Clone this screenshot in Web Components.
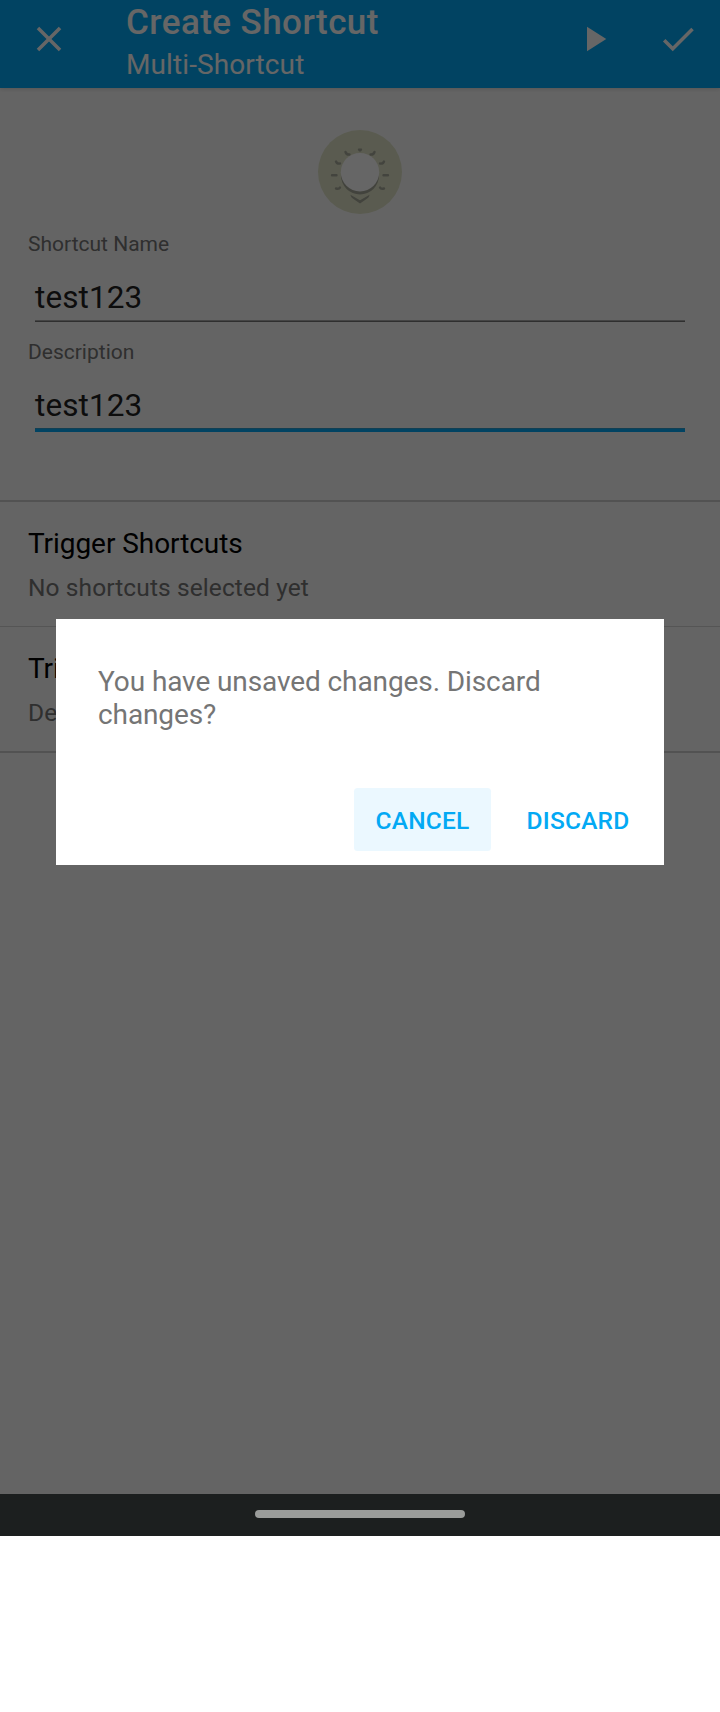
<!DOCTYPE html>
<html lang="en"><head><meta charset="utf-8"><title>Create Shortcut</title>
<style>body{margin:0;background:#fff;font-family:Roboto,sans-serif}</style></head>
<body>
<phone-screen>
  <app-bar heading="Create Shortcut" subheading="Multi-Shortcut"></app-bar>
  <shortcut-form>
    <shortcut-icon></shortcut-icon>
    <text-field label="Shortcut Name">test123</text-field>
    <text-field label="Description" class="active">test123</text-field>
  </shortcut-form>
  <setting-row class="thick" label="Trigger Shortcuts">No shortcuts selected yet</setting-row>
  <setting-row class="last" label="Tri">De</setting-row>
  <confirm-dialog slot="dialog">You have unsaved changes. Discard changes?
    <dialog-button slot="actions" class="pressed">CANCEL</dialog-button>
    <dialog-button slot="actions">DISCARD</dialog-button>
  </confirm-dialog>
  <nav-bar slot="nav"></nav-bar>
</phone-screen>
<script>
const define = (name, render) => customElements.define(name, class extends HTMLElement {
  constructor() { super(); this.attachShadow({mode: 'open'}); }
  connectedCallback() { this.shadowRoot.innerHTML = render(this); }
});
define('phone-screen', () => `<style>
:host{display:block;width:720px}
.page{position:relative;height:1494px;background:#fafafa;overflow:hidden}
.scrim{position:absolute;inset:0;background:rgba(0,0,0,.6)}
.layer{position:absolute;left:56px;top:619px}
</style><div class="page"><slot></slot><div class="scrim"></div><div class="layer"><slot name="dialog"></slot></div></div><slot name="nav"></slot>`);
define('app-bar', e => `<style>
:host{display:flex;position:relative;box-sizing:border-box;height:88px;padding:2px 21px 0 28px;background:#03a9f4;color:#fff;box-shadow:0 1px 4px rgba(0,0,0,.15)}
svg{width:42px;height:42px;fill:#fff;margin-top:16px;flex:none}
.t{margin-left:56px;flex:1}
.a{font-size:35px;line-height:41px;font-weight:500;letter-spacing:.43px}
.b{font-size:28px;line-height:33px;margin-top:5px;letter-spacing:.1px}
.actions{display:flex;gap:42px}
</style><svg viewBox="0 0 24 24"><path d="M19 6.41 17.59 5 12 10.59 6.41 5 5 6.41 10.59 12 5 17.59 6.41 19 12 13.41 17.59 19 19 17.59 13.41 12z"/></svg>
<div class="t"><div class="a">${e.getAttribute('heading')}</div><div class="b">${e.getAttribute('subheading')}</div></div>
<div class="actions"><svg viewBox="0 0 24 24"><path d="M8 5v14l11-7z"/></svg><svg viewBox="0 0 24 24"><path d="M9 16.17 4.83 12l-1.42 1.41L9 19 21 7l-1.41-1.41z"/></svg></div>`);
define('shortcut-form', () => `<style>:host{display:block;box-sizing:border-box;height:412px;padding:42px 28px 0}</style><slot></slot>`);
define('shortcut-icon', () => `<style>:host{display:block;width:84px;height:84px;margin:0 auto 17px}svg{display:block}</style>
<svg width="84" height="84" viewBox="0 0 84 84"><circle cx="42" cy="42" r="42" fill="#e1e4c8"/>
<g fill="none" stroke="#a9ab9b" stroke-width="2.400" stroke-linecap="round">
<path d="M41 19.500q1 2 2 0M27.500 22q1 3 4 2.500M56.500 22q-1 3-4 2.500M18 31.500q1 2.500 4 2M66 31.500q-1 2.500-4 2M14 45.300h4.500M70 45.300h-4.500M18 58.500q3 1 4-1M66 58.500q-3 1-4-1"/></g>
<path d="M33.500 66q.5 1.500 2 2.200l6.500 4.600 6.500-4.600q1.500-.7 2-2.200L42 71z" fill="#a6a898" stroke="#a6a898" stroke-width="1.200"/>
<circle cx="42" cy="45.500" r="19" fill="#a6a898"/><circle cx="42" cy="42.200" r="19.200" fill="#fff"/></svg>`);
define('text-field', e => `<style>
:host{display:block;height:108px}
label{display:block;padding-top:1px;font-size:21px;line-height:25px;color:#757575}
.v{margin:22px 7px 0;font-size:31.5px;line-height:37px;color:#212121;letter-spacing:.08px}
.u{margin:4px 7px 0;height:2px;background:linear-gradient(#aaa 0 1px,#777 1px)}
:host(.active) .u{height:4px;background:linear-gradient(#2f9fd0 0 1px,#03a9f4 1px)}
</style><label>${e.getAttribute('label')}</label><div class="v"><slot></slot></div><div class="u"></div>`);
define('setting-row', e => `<style>
:host{display:block;border-top:1px solid #d4d4d4;padding:25px 28px 24px}
:host(.thick){border-top:2px solid #ccc}
:host(.last){border-bottom:2px solid #ccc}
.t{font-size:28px;line-height:33px;color:#000;letter-spacing:-.06px}
.s{margin-top:13px;font-size:24.5px;line-height:29px;color:#757575;letter-spacing:.1px}
</style><div class="t">${e.getAttribute('label')}</div><div class="s"><slot></slot></div>`);
define('confirm-dialog', () => `<style>
:host{display:flex;flex-direction:column;box-sizing:border-box;width:608px;height:246px;background:#fff;padding:46px 13px 14px 42px}
.m{font-size:28px;line-height:33px;color:#757575;width:500px;letter-spacing:-.1px}
.a{display:flex;justify-content:flex-end;gap:14px;margin-top:auto}
</style><div class="m"><slot></slot></div><div class="a"><slot name="actions"></slot></div>`);
define('dialog-button', () => `<style>
:host{display:block;box-sizing:border-box;height:63px;width:146px;text-align:center;padding-top:3px;border-radius:3.500px;font-size:24.5px;line-height:59px;font-weight:500;color:#03a9f4;letter-spacing:.2px}
:host(.pressed){width:137px;background:#ebf8ff}
</style><slot></slot>`);
define('nav-bar', () => `<style>
:host{display:flex;height:42px;background:#1c1f1f;justify-content:center;box-sizing:border-box;padding-top:16px}
div{width:210px;height:8px;border-radius:4px;background:#9a9c9a}
</style><div></div>`);
</script></body></html>
